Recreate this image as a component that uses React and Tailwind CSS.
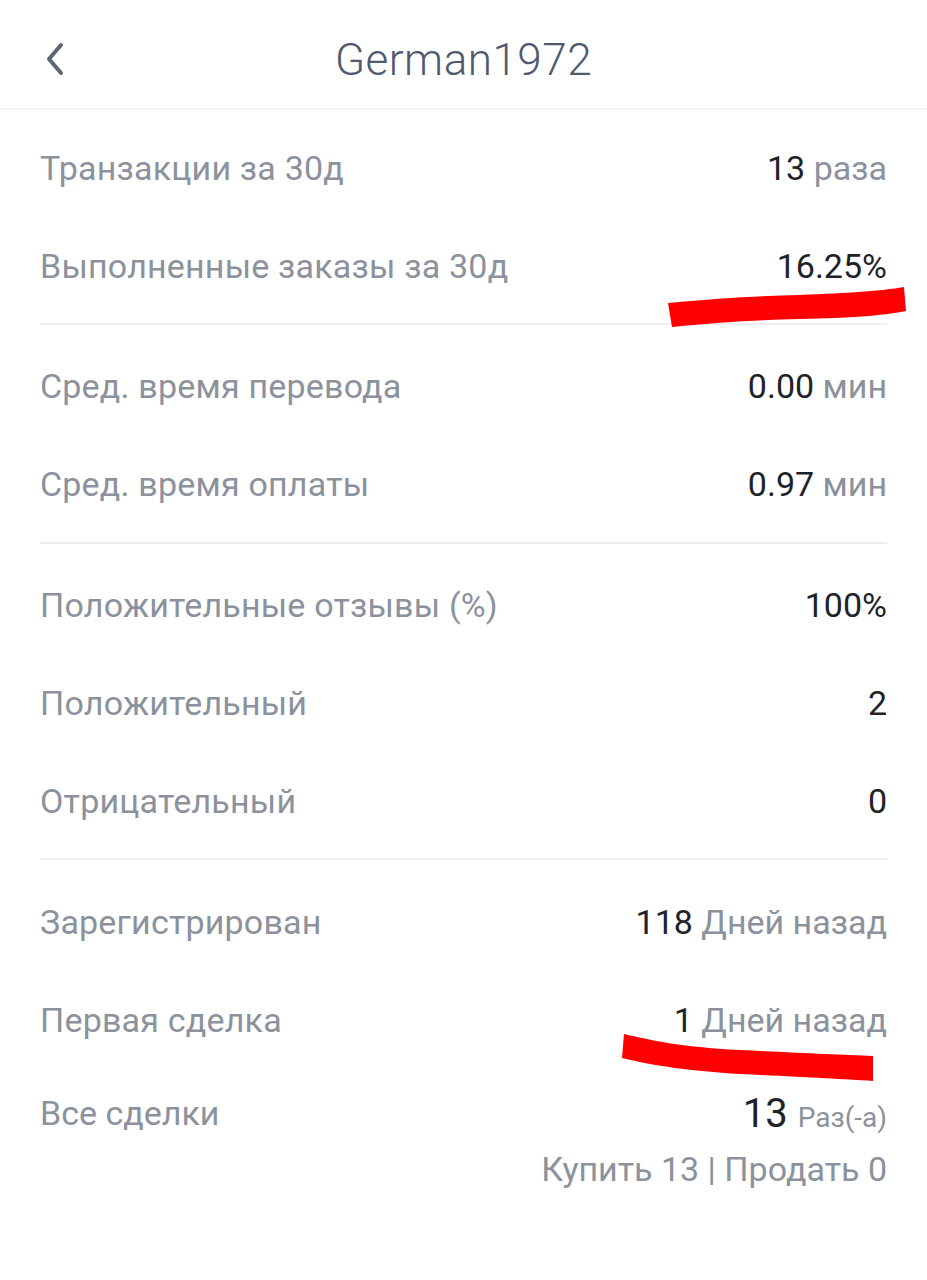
import React from 'react';

const font = { fontFamily: 'Roboto, "Noto Sans", sans-serif' };

function Row({ label, children }) {
  return (
    <div className="flex h-[98px] items-center justify-between px-[40px]">
      <span className="text-[34px] text-[#8b929d] tracking-[0.2px]">{label}</span>
      <span className="text-[34px] text-[#1e2329]">{children}</span>
    </div>
  );
}

function Unit({ children }) {
  return <span className="text-[#8b929d]">{children}</span>;
}

function Divider() {
  return <div className="mx-[40px] h-[2px] bg-[#eceef1]" />;
}

export default function App() {
  return (
    <div className="relative w-[927px] min-h-[1280px] bg-white" style={font}>
      <header className="relative flex h-[110px] items-center justify-center border-b-2 border-[#f4f5f7] pt-[12px]">
        <button className="absolute left-[38px] top-[36px] p-1">
          <svg width="26" height="38" viewBox="0 0 26 38" fill="none">
            <path d="M19 5 L7 19 L19 33" stroke="#5e6673" strokeWidth="4" strokeLinecap="round" strokeLinejoin="round" />
          </svg>
        </button>
        <h1 className="text-[44px] font-light text-[#4f5a70] tracking-[0.5px]">German1972</h1>
      </header>

      <section className="pt-[9px] pb-[8px]">
        <Row label="Транзакции за 30д">13 <Unit>раза</Unit></Row>
        <Row label="Выполненные заказы за 30д">16.25%</Row>
      </section>
      <Divider />
      <section className="pt-[12px] pb-[9px]">
        <Row label="Сред. время перевода">0.00 <Unit>мин</Unit></Row>
        <Row label="Сред. время оплаты">0.97 <Unit>мин</Unit></Row>
      </section>
      <Divider />
      <section className="pt-[12px] pb-[8px]">
        <Row label="Положительные отзывы (%)">100%</Row>
        <Row label="Положительный">2</Row>
        <Row label="Отрицательный">0</Row>
      </section>
      <Divider />
      <section className="pt-[13px]">
        <Row label="Зарегистрирован">118 <Unit>Дней назад</Unit></Row>
        <Row label="Первая сделка">1 <Unit>Дней назад</Unit></Row>
        <div className="flex items-start justify-between px-[40px] pt-[22px]">
          <span className="text-[34px] leading-[44px] text-[#8b929d]">Все сделки</span>
          <div className="flex flex-col items-end">
            <span className="leading-[46px]">
              <span className="text-[40px] text-[#1e2329]">13 </span>
              <span className="text-[28px] text-[#8b929d]">Раз(-а)</span>
            </span>
            <span className="text-[34px] leading-[48px] text-[#8b929d]">Купить 13 | Продать 0</span>
          </div>
        </div>
      </section>

      <svg className="pointer-events-none absolute left-0 top-0" width="927" height="1280" viewBox="0 0 927 1280">
        <path d="M668 303 C720 298 760 296 800 295 C850 293 880 291 904 287 L906 311 C880 316 850 318 800 319 C760 320 720 322 672 327 Z" fill="#ff0000" />
        <path d="M624 1034 C650 1040 680 1047 740 1050 C800 1053 840 1055 873 1056 L873 1081 C840 1079 800 1077 740 1074 C690 1071 655 1066 622 1058 Z" fill="#ff0000" />
      </svg>
    </div>
  );
}
